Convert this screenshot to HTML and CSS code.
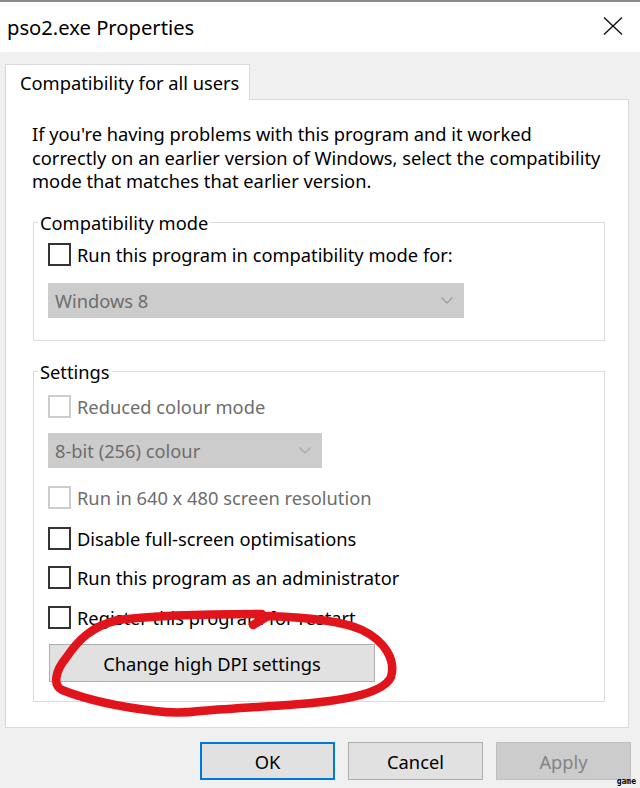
FILE: index.html
```html
<!DOCTYPE html>
<html lang="en">
<head>
<meta charset="utf-8">
<title>pso2.exe Properties</title>
<link rel="stylesheet" href="styles.css">
</head>
<body>
<div class="window">
  <div class="titlebar">
    <span class="title">pso2.exe Properties</span>
    <svg class="close" width="20" height="18" viewBox="0 0 20 18"><path d="M1 0.5 L19 17.5 M19 0.5 L1 17.5" stroke="#111" stroke-width="1.4" fill="none"/></svg>
  </div>
  <div class="content">
    <div class="tab">Compatibility for all users</div>
    <div class="panel">
      <p class="intro">If you're having problems with this program and it worked<br>correctly on an earlier version of Windows, select the compatibility<br>mode that matches that earlier version.</p>
      <fieldset class="group g1">
        <legend>Compatibility mode</legend>
        <div class="check"><span class="box"></span><span>Run this program in compatibility mode for:</span></div>
        <div class="select wide"><span>Windows 8</span><svg class="chev" width="12" height="7" viewBox="0 0 12 7"><path d="M0.5 0.5 L6 6 L11.5 0.5" stroke="#9a9a9a" stroke-width="1.2" fill="none"/></svg></div>
      </fieldset>
      <fieldset class="group g2">
        <legend>Settings</legend>
        <div class="check disabled r1"><span class="box"></span><span>Reduced colour mode</span></div>
        <div class="select narrow"><span>8-bit (256) colour</span><svg class="chev" width="12" height="7" viewBox="0 0 12 7"><path d="M0.5 0.5 L6 6 L11.5 0.5" stroke="#a8a8a8" stroke-width="1.2" fill="none"/></svg></div>
        <div class="check disabled r3"><span class="box"></span><span>Run in 640 x 480 screen resolution</span></div>
        <div class="check r4"><span class="box"></span><span>Disable full-screen optimisations</span></div>
        <div class="check r5"><span class="box"></span><span>Run this program as an administrator</span></div>
        <div class="check r6"><span class="box"></span><span>Register this program for restart</span></div>
        <div class="dpi">Change high DPI settings</div>
      </fieldset>
    </div>
    <div class="actions">
      <div class="btn ok">OK</div>
      <div class="btn">Cancel</div>
      <div class="btn off">Apply</div>
    </div>
  </div>
</div>
<svg class="scribble" width="640" height="788" viewBox="0 0 640 788"><path d="M253 625 L268 616 C300 617 340 620 362 630 C385 641 396 660 391 677 C384 692 350 700 300 704 C260 707 220 709 200 711 C185 713 170 713 155 711 C120 707 85 699 62 690 C52 685 56 670 66 658 C78 640 92 626 118 620 C150 616 200 614 262 614" stroke="#e2141b" stroke-width="8.5" fill="none" stroke-linecap="round" stroke-linejoin="round"/></svg>
<span class="wm">game</span>
</body>
</html>
```
FILE: styles.css
```css
* { box-sizing: border-box; }
html, body { margin: 0; padding: 0; }
body {
  width: 640px;
  height: 788px;
  background: #f0f0f0;
  font-family: "Noto Sans", "Open Sans", sans-serif;
  font-size: 18.3px;
  color: #000;
  position: relative;
  overflow: hidden;
}
.titlebar {
  height: 52px;
  background: #fff;
  border-top: 2px solid #8a8a8a;
  display: flex;
  align-items: center;
  justify-content: space-between;
  padding: 0 17px 0 7px;
}
.title { font-size: 20.2px; }
.close { display: block; margin-bottom: 3px; }
.content { padding: 12px 11px 0 5px; }
.tab {
  position: relative;
  z-index: 1;
  width: 245px;
  height: 36px;
  margin-bottom: -1px;
  background: #fff;
  border: 1px solid #d9d9d9;
  border-bottom: none;
  padding-left: 14px;
  display: flex;
  align-items: center;
}
.panel {
  background: #fff;
  border: 1px solid #d9d9d9;
  padding: 22px 23px 25px 26px;
}
.intro { margin: 0 0 18.5px; line-height: 23.5px; }
.group {
  margin: 0 0 0 1px;
  border: 1px solid #dcdcdc;
  padding: 0 14px 22px;
  min-width: 0;
}
.group legend {
  padding: 0 2px;
  margin-left: -10px;
  line-height: 23.5px;
}
.g2 { margin-top: 19px; padding-bottom: 19px; }
.check {
  display: flex;
  align-items: center;
  height: 24px;
  gap: 6px;
  margin-top: 8px;
}
.box {
  flex: none;
  width: 23px;
  height: 23px;
  border: 2px solid #333;
  background: #fff;
}
.disabled { color: #6d6d6d; }
.disabled .box { border-color: #cdcdcd; }
.select {
  display: flex;
  align-items: center;
  justify-content: space-between;
  height: 35px;
  margin-top: 16px;
  background: #cccccc;
  color: #6d6d6d;
  padding: 0 11px 0 7px;
}
.wide { width: 416px; }
.narrow { width: 274px; margin-top: 15px; }
.chev { display: block; }
.r1 { margin-top: 11px; }
.r3 { margin-top: 17px; }
.r4 { margin-top: 17px; }
.r5 { margin-top: 15px; }
.r6 { margin-top: 16px; }
.dpi {
  margin: 15px 0 0 1px;
  width: 326px;
  height: 38px;
  background: #e1e1e1;
  border: 1px solid #adadad;
  display: flex;
  align-items: center;
  justify-content: center;
}
.actions {
  display: flex;
  justify-content: flex-end;
  gap: 13px;
  margin: 14px -2px 0 0;
}
.btn {
  width: 135px;
  height: 38px;
  background: #e1e1e1;
  border: 1px solid #adadad;
  display: flex;
  align-items: center;
  justify-content: center;
}
.btn.ok { border: 2px solid #0078d7; }
.btn.off { background: #cccccc; border-color: #bfbfbf; color: #838383; }
.scribble {
  position: absolute;
  top: 0;
  left: 0;
  pointer-events: none;
}
.wm {
  position: absolute;
  right: 4px;
  bottom: 2px;
  font: bold 8px/8px "DejaVu Sans Mono", monospace;
  color: #000;
}
```
